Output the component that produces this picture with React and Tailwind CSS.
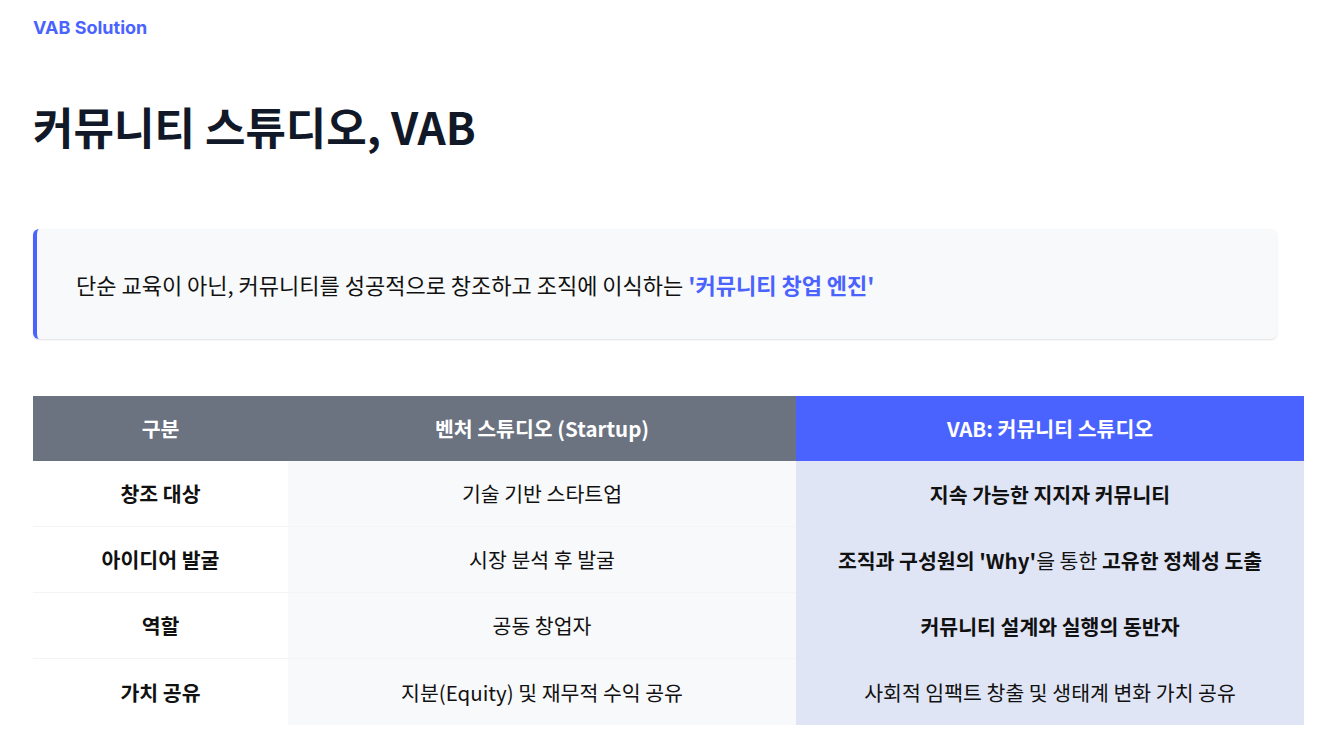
import React from 'react';

const rows = [
  {
    label: '창조 대상',
    venture: '기술 기반 스타트업',
    vab: <span className="font-bold">지속 가능한 지지자 커뮤니티</span>,
  },
  {
    label: '아이디어 발굴',
    venture: '시장 분석 후 발굴',
    vab: (
      <span>
        <span className="font-bold">조직과 구성원의 'Why'</span>을 통한{' '}
        <span className="font-bold">고유한 정체성 도출</span>
      </span>
    ),
  },
  {
    label: '역할',
    venture: '공동 창업자',
    vab: <span className="font-bold">커뮤니티 설계와 실행의 동반자</span>,
  },
  {
    label: '가치 공유',
    venture: '지분(Equity) 및 재무적 수익 공유',
    vab: '사회적 임팩트 창출 및 생태계 변화 가치 공유',
  },
];

const App = () => {
  return (
    <div className="min-h-screen bg-white pl-[33px] font-['Noto_Sans_CJK_KR','Noto_Sans',sans-serif] text-[#111111]">
      {/* 섹션 라벨 */}
      <div className="pt-[17px] text-[18px] font-bold leading-[22px] text-[#4a63ff] font-['Inter','Noto_Sans_CJK_KR',sans-serif]">
        VAB Solution
      </div>

      {/* 타이틀 */}
      <h1 className="mt-[58px] text-[44px] font-bold leading-[58px] text-[#111827]">
        커뮤니티 스튜디오, VAB
      </h1>

      {/* 설명 박스 */}
      <div className="mt-[74px] flex h-[110px] w-[1244px] items-center rounded-md border-l-4 border-[#4a63ff] bg-[#f8f9fa] pl-[39px] shadow-[0_1px_2px_rgba(0,0,0,0.12)]">
        <p className="text-[22px] leading-[30px]">
          단순 교육이 아닌, 커뮤니티를 성공적으로 창조하고 조직에 이식하는{' '}
          <span className="font-bold text-[#4a63ff]">'커뮤니티 창업 엔진'</span>
        </p>
      </div>

      {/* 비교 테이블 */}
      <div className="mt-[57px] w-[1271px] text-[20.5px]">
        <div className="grid h-[65px] grid-cols-[255px_508px_508px] font-semibold text-white">
          <div className="flex items-center justify-center bg-[#6b7280]">구분</div>
          <div className="flex items-center justify-center bg-[#6b7280]">벤처 스튜디오 (Startup)</div>
          <div className="flex items-center justify-center bg-[#4a63ff]">VAB: 커뮤니티 스튜디오</div>
        </div>
        {rows.map((row, i) => {
          const line = i < rows.length - 1 ? 'border-b border-[#f3f4f6]' : '';
          return (
            <div key={row.label} className="grid h-[66px] grid-cols-[255px_508px_508px]">
              <div className={`flex items-center justify-center bg-white font-bold ${line}`}>{row.label}</div>
              <div className={`flex items-center justify-center bg-[#f8f9fb] ${line}`}>{row.venture}</div>
              <div className="flex items-center justify-center bg-[#e0e5f5]">{row.vab}</div>
            </div>
          );
        })}
      </div>
    </div>
  );
};

export default App;
